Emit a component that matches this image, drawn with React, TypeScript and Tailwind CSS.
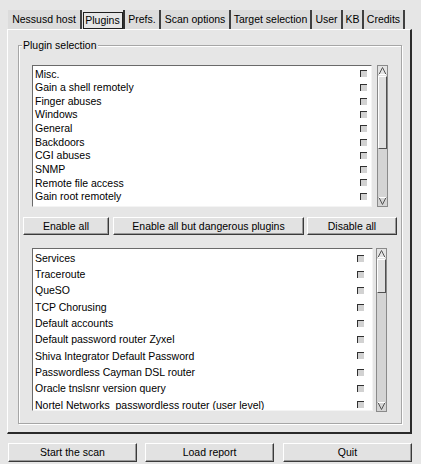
import React from 'react'

const pluginFamilies = [
  'Misc.',
  'Gain a shell remotely',
  'Finger abuses',
  'Windows',
  'General',
  'Backdoors',
  'CGI abuses',
  'SNMP',
  'Remote file access',
  'Gain root remotely',
  'RPC',
]

const plugins = [
  'Services',
  'Traceroute',
  'QueSO',
  'TCP Chorusing',
  'Default accounts',
  'Default password router Zyxel',
  'Shiva Integrator Default Password',
  'Passwordless Cayman DSL router',
  'Oracle tnslsnr version query',
  'Nortel Networks  passwordless router (user level)',
]

const tabs = [
  { label: 'Nessusd host', w: 'w-[74px]' },
  { label: 'Plugins', w: 'w-[43px]', active: true },
  { label: 'Prefs.', w: 'w-[36px]' },
  { label: 'Scan options', w: 'w-[70px]' },
  { label: 'Target selection', w: 'w-[81px]' },
  { label: 'User', w: 'w-[31px]' },
  { label: 'KB', w: 'w-[21px]' },
  { label: 'Credits', w: 'w-[41px]' },
]

function Check() {
  return <span className="block w-[7px] h-[7px] border-t border-l border-[#303030] bg-[#d2d2d2]" />
}

function Scrollbar({ thumb }: { thumb: string }) {
  return (
    <div className="w-[11px] flex flex-col border border-[#8a8a8a] bg-[#d4d4d4]">
      <svg width="9" height="10" viewBox="0 0 9 10" className="shrink-0 bg-[#e4e4e4]">
        <path d="M1 8.5 L4.5 1.5 L8 8.5" fill="none" stroke="#555" strokeWidth="1" />
        <path d="M1 8.5 H8" stroke="#fff" strokeWidth="1" />
      </svg>
      <div className={`${thumb} shrink-0 border-t border-l border-white border-r border-b border-r-[#505050] border-b-[#505050] bg-[#e0e0e0]`} />
      <div className="flex-1" />
      <svg width="9" height="10" viewBox="0 0 9 10" className="shrink-0">
        <path d="M1 1.5 L4.5 8.5 L8 1.5" fill="none" stroke="#555" strokeWidth="1" />
        <path d="M1 1.5 H8" stroke="#fff" strokeWidth="1" />
      </svg>
    </div>
  )
}

function Button({ label, className }: { label: string; className: string }) {
  return (
    <div
      className={`${className} flex items-center justify-center border-t border-l border-white border-r border-b border-r-[#3a3a3a] border-b-[#3a3a3a] shadow-[inset_-1px_-1px_0_#9a9a9a] bg-[#e2e2e2]`}
    >
      {label}
    </div>
  )
}

export default function App() {
  return (
    <div
      className="w-[421px] h-[464px] bg-[#e6e6e6] text-black text-[10.5px] leading-none overflow-hidden"
      style={{ fontFamily: '"Liberation Sans", Arial, sans-serif' }}
    >
      <div className="pt-[10px] pl-[7px]">
        {/* tab strip */}
        <div className="flex h-[19px] pl-px">
          {tabs.map((t) => (
            <div
              key={t.label}
              className={
                t.active
                  ? `${t.w} flex items-center justify-center border-r-2 border-[#303030] bg-[#e6e6e6]`
                  : `${t.w} flex items-center justify-center border-r-2 border-[#404040] bg-[#dcdcdc]`
              }
            >
              {t.active ? (
                <span className="flex items-center justify-center w-[40px] h-[17px] mt-[2px] border border-[#202020]">
                  {t.label}
                </span>
              ) : (
                t.label
              )}
            </div>
          ))}
        </div>

        {/* notebook page */}
        <div className="w-[405px] h-[405px] border-t border-l border-white border-r-2 border-b-2 border-r-[#2a2a2a] border-b-[#2a2a2a] pt-[15px] pl-[10px]">
          <div className="relative w-[384px] h-[379px] border border-[#a6a6a6] shadow-[inset_1px_1px_0_#fff,1px_1px_0_#fff] pt-[19px] pl-[4px]">
            <span className="absolute left-[3px] top-[-6px] px-px bg-[#e6e6e6]">Plugin selection</span>

            <div className="flex ml-[9px]">
              <div className="w-[340px] h-[142px] overflow-hidden bg-white border-t border-l border-[#6a6a6a] border-r border-b border-r-[#f4f4f4] border-b-[#f4f4f4] pt-px">
                {pluginFamilies.map((p) => (
                  <div key={p} className="flex items-center h-[13.65px] pl-[2px] pr-[4px]">
                    <span className="flex-1">{p}</span>
                    <Check />
                  </div>
                ))}
              </div>
              <div className="ml-[5px] h-[142px] flex">
                <Scrollbar thumb="h-[73px]" />
              </div>
            </div>

            <div className="flex mt-[10px] h-[18px]">
              <Button label="Enable all" className="w-[86px]" />
              <Button label="Enable all but dangerous plugins" className="w-[191px] ml-[4px]" />
              <Button label="Disable all" className="w-[90px] ml-[3px]" />
            </div>

            <div className="flex ml-[9px] mt-[13px]">
              <div className="w-[341px] h-[163px] overflow-hidden bg-white border-t border-l border-[#6a6a6a] border-r border-b border-r-[#f4f4f4] border-b-[#f4f4f4] pt-px">
                {plugins.map((p) => (
                  <div key={p} className="flex items-center h-[16.3px] pl-[2px] pr-[8px]">
                    <span className="flex-1 whitespace-pre">{p}</span>
                    <Check />
                  </div>
                ))}
              </div>
              <div className="ml-[3px] h-[164px] flex">
                <Scrollbar thumb="h-[34px]" />
              </div>
            </div>
          </div>
        </div>

        {/* bottom buttons */}
        <div className="flex mt-[9px] ml-px h-[19px]">
          <Button label="Start the scan" className="w-[129px]" />
          <Button label="Load report" className="w-[129px] ml-[8px]" />
          <Button label="Quit" className="w-[129px] ml-[9px]" />
        </div>
      </div>
    </div>
  )
}
